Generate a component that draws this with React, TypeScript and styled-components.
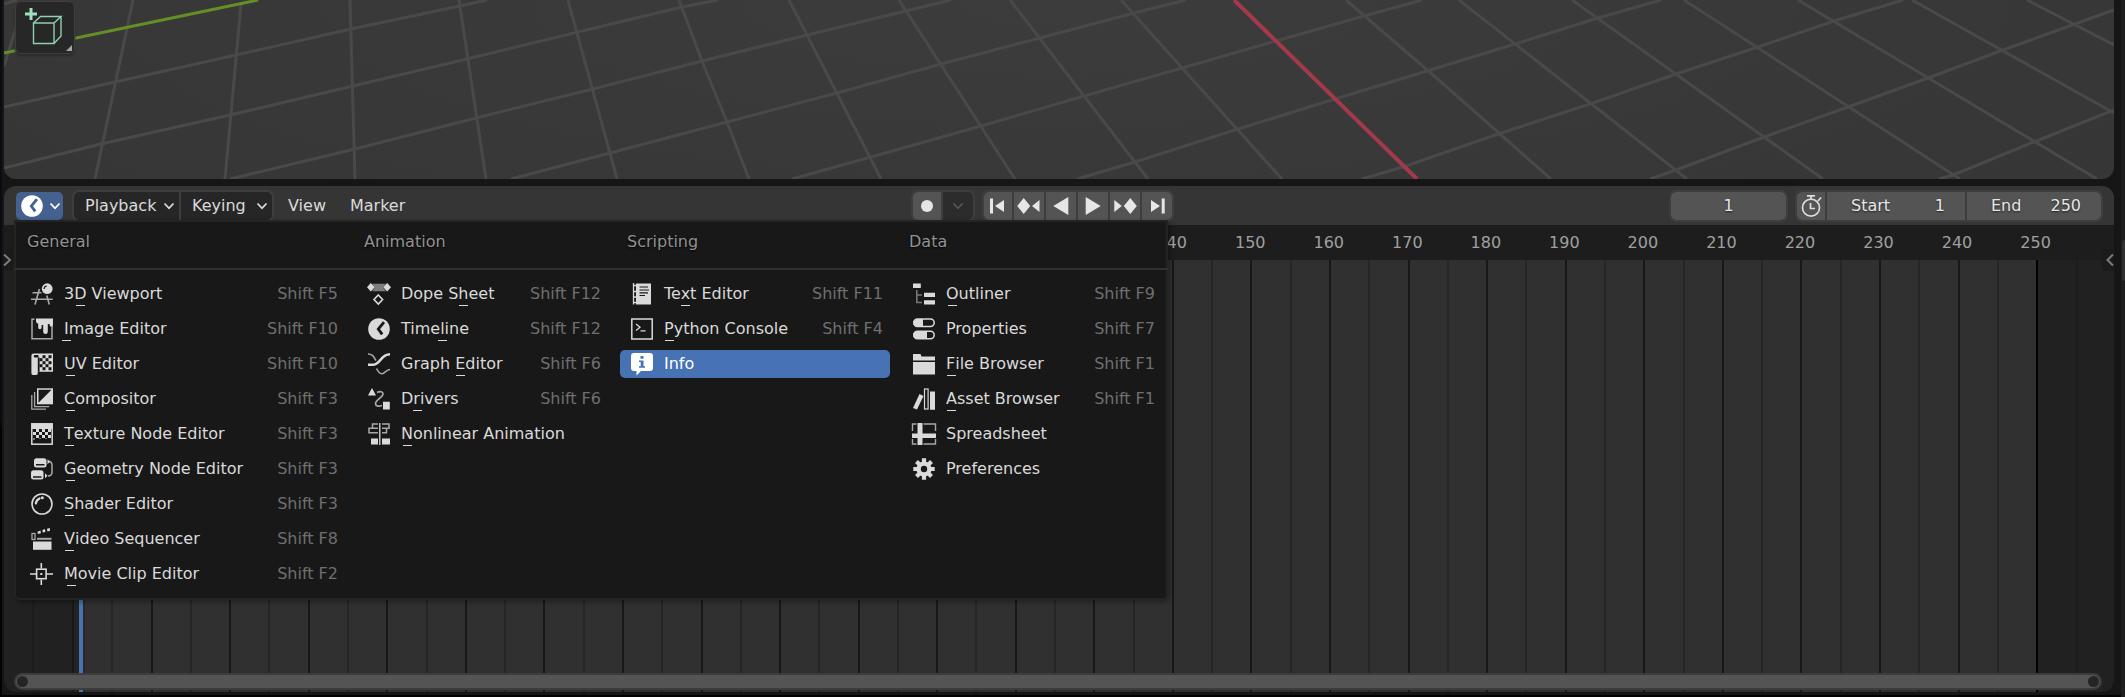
import React from "react";
import styled, { createGlobalStyle, css } from "styled-components";

const GlobalStyle = createGlobalStyle`
  * { box-sizing: border-box; }
  html, body { margin: 0; background: #161616; }
  body, button, input {
    font-family: "DejaVu Sans", sans-serif;
    font-size: 16px;
    line-height: 20px;
  }
  button {
    margin: 0;
    padding: 0;
    border: 0;
    background: none;
    color: inherit;
    text-align: left;
  }
`;

const color = {
  gap: "#161616",
  header: "#353535",
  outline: "#3e3e3e",
  field: "#545454",
  dark: "#262626",
  text: "#dadada",
  icon: "#dcdcdc",
  dim: "#a8a8a8",
};

/* ---------- window frame ---------- */

const Window = styled.div`
  display: flex;
  min-height: 100vh;
  background: ${color.gap};
  color: ${color.text};
  overflow: hidden;
`;

const LeftEdge = styled.div`
  width: 2px;
  background: linear-gradient(#0a0c14 0 60%, #030304 62%);
`;

const Workspace = styled.main`
  flex: 1;
  min-width: 0;
  display: flex;
  flex-direction: column;
  gap: 7px;
  padding: 0 7px 5px 2px;
  box-shadow: inset 0 -2px #020202;
`;

const Neighbour = styled.aside`
  width: 4px;
  display: flex;
  flex-direction: column;
  padding-top: 240px;
  background: #1e1e1e;
`;

const NeighbourTab = styled.div`
  height: 41px;
  margin-left: 1px;
  border-radius: 4px 0 0 4px;
  background: #303030;
`;

/* ---------- viewport ---------- */

const Viewport = styled.section`
  position: relative;
  height: 179px;
  border-radius: 0 0 12px 12px;
  overflow: hidden;
  background: radial-gradient(ellipse 70% 200% at 50% 0, #3c3c3c, #353535);
`;

const Floor = styled.svg`
  display: block;
  width: 100%;
  height: 100%;
`;

const ToolButton = styled.button`
  position: absolute;
  top: 1px;
  left: 11px;
  display: flex;
  width: 60px;
  height: 53px;
  border: 1px solid #3f3f3f;
  border-radius: 6px;
  background: #272727;
  box-shadow: 0 2px 2px #2b2b2b;
`;

/* ---------- timeline ---------- */

const Timeline = styled.section`
  position: relative;
  flex: 1;
  display: flex;
  flex-direction: column;
  border-radius: 12px;
  background: #212121;
`;

const Header = styled.header`
  display: flex;
  justify-content: space-between;
  align-items: center;
  height: 39px;
  padding: 0 13px 0 12px;
  border-radius: 12px 12px 0 0;
  background: ${color.header};
  text-shadow: 0 1px 2px rgba(0, 0, 0, 0.6);
`;

const Cluster = styled.div<{ $gap: number }>`
  display: flex;
  align-items: center;
  gap: ${(p) => p.$gap}px;
`;

const Group = styled.div`
  display: flex;
  gap: 2px;
  height: 28px;
  border-radius: 5px;
  overflow: hidden;
  background: ${color.outline};
  outline: 2px solid ${color.outline};
`;

const EditorType = styled.button`
  display: flex;
  align-items: center;
  gap: 6px;
  width: 47px;
  height: 28px;
  margin-right: 3px;
  padding-left: 5px;
  border-radius: 5px;
  background: #44618f;
  color: #fff;
`;

const MenuButton = styled.button<{ $width: number }>`
  display: flex;
  align-items: center;
  justify-content: space-between;
  width: ${(p) => p.$width}px;
  padding: 0 4px 0 11px;
  background: ${color.dark};
`;

const FlatButton = styled.button`
  height: 28px;
  padding: 0 8px;
`;

const IconButton = styled.button<{ $width: number; $dark?: boolean }>`
  display: flex;
  align-items: center;
  justify-content: center;
  width: ${(p) => p.$width}px;
  background: ${(p) => (p.$dark ? "#2c2c2c" : color.field)};
  color: ${(p) => (p.$dark ? "#555" : "#e6e6e6")};
`;

const NumberField = styled.label<{ $width: number; $center?: boolean }>`
  display: flex;
  align-items: center;
  width: ${(p) => p.$width}px;
  padding: ${(p) => (p.$center ? "0 20px" : "0 20px 0 24px")};
  background: ${color.field};
  color: #e6e6e6;
  input {
    flex: 1;
    min-width: 0;
    padding: 0;
    border: 0;
    outline: 0;
    background: none;
    color: inherit;
    text-shadow: inherit;
    text-align: ${(p) => (p.$center ? "center" : "right")};
  }
`;

const Ruler = styled.div`
  display: flex;
  align-items: center;
  height: 35px;
  padding: 0 39px 0 29px;
  background: #1d1d1d;
  color: #a0a0a0;
`;

const RulerMark = styled.span`
  flex: 1;
  min-width: 0;
  text-align: center;
`;

const Tracks = styled.div`
  position: relative;
  flex: 1;
  display: flex;
  border-radius: 0 0 12px 12px;
  overflow: hidden;
`;

const lineColor = { faint: "#1d1d1d", minor: "#262626", major: "#181818", end: "#030303" };

const Cell = styled.div<{ $line: keyof typeof lineColor; $width?: number }>`
  ${(p) =>
    p.$width
      ? css`
          flex: 0 0 ${p.$width}px;
        `
      : css`
          flex: 1;
          background: #303030;
        `}
  border-right: 2px solid ${(p) => lineColor[p.$line]};
`;

const Tail = styled.div`
  flex: 0 0 36px;
`;

const Playhead = styled.div`
  position: absolute;
  top: 0;
  bottom: 0;
  left: 70px;
  width: 11px;
  border-left: 5px solid #232323;
  border-right: 2px solid #282828;
  background: #4772b3;
`;

const ScrollBar = styled.div`
  position: absolute;
  left: 10px;
  right: 12px;
  bottom: 2px;
  display: flex;
  justify-content: space-between;
  align-items: center;
  height: 17px;
  padding: 0 1px;
  border: 2px solid #3c3c3c;
  border-radius: 9px;
  background: #545454;
`;

const ScrollHandle = styled.span`
  width: 11px;
  height: 11px;
  border-radius: 50%;
  background: #252525;
`;

const RegionToggle = styled.button<{ $side: "left" | "right" }>`
  position: absolute;
  top: 63px;
  display: flex;
  align-items: center;
  height: 22px;
  background: #1b1b1b;
  color: #7c7c7c;
  ${(p) =>
    p.$side === "left"
      ? css`
          left: 0;
          width: 9px;
          border-radius: 0 4px 4px 0;
        `
      : css`
          right: 0;
          width: 12px;
          padding-left: 4px;
          border-radius: 4px 0 0 4px;
        `}
`;

/* ---------- editor type menu ---------- */

const Menu = styled.nav`
  position: absolute;
  top: 34px;
  left: 10px;
  z-index: 2;
  display: grid;
  grid-template-columns: 325px 251px 270px 260px;
  column-gap: 12px;
  padding: 0 4px;
  border: 2px solid #242424;
  border-radius: 0 0 6px 6px;
  background: #181818;
  box-shadow: 2px 2px 5px rgba(0, 0, 0, 0.35);
  text-shadow: 0 1px 2px #000;
`;

const Title = styled.h2`
  margin: 0;
  height: 46px;
  padding: 10px 7px;
  font-size: 16px;
  line-height: 20px;
  font-weight: 400;
  color: #929292;
`;

const Divider = styled.hr`
  grid-column: 1 / -1;
  height: 2px;
  margin: 0 -6px;
  border: 0;
  background: #303030;
`;

const Items = styled.div`
  display: flex;
  flex-direction: column;
  gap: 7px;
  padding: 10px 0;
`;

const Item = styled.button<{ $active?: boolean }>`
  display: flex;
  align-items: center;
  height: 28px;
  padding: 0 7px 0 11px;
  border-radius: 5px;
  color: ${(p) => (p.$active ? "#fff" : color.text)};
  background: ${(p) => (p.$active ? "#4772b3" : "transparent")};
`;

const ItemLabel = styled.span`
  flex: 1;
  padding-left: 11px;
  white-space: nowrap;
`;

const Shortcut = styled.span`
  color: #6f6f6f;
  white-space: nowrap;
`;

const Mnemonic = styled.span`
  position: relative;
  &::after {
    content: "";
    position: absolute;
    left: calc(50% - 4px);
    bottom: -3px;
    width: 9px;
    height: 1px;
    background: currentColor;
  }
`;

/* ---------- icons ---------- */

const Drawing = styled.svg`
  flex: none;
  overflow: visible;
`;

const Svg = ({ children, w = 22, h = 22 }: { children: React.ReactNode; w?: number; h?: number }) => (
  <Drawing width={w} height={h} viewBox={`0 0 ${w} ${h}`} fill="currentColor" aria-hidden="true">
    {children}
  </Drawing>
);

const Chevron = () => (
  <Svg w={12} h={8}>
    <path d="M1.5 1.5 6 6.3 10.5 1.5" fill="none" stroke="currentColor" strokeWidth="1.8" />
  </Svg>
);

const bg = "#181818";

const Checks = ({ x, y, cols, rows, s, fill }: { x: number; y: number; cols: number; rows: number; s: number; fill: string }) => (
  <g fill={fill}>
    {Array.from({ length: cols * rows }, (_, i) => {
      const c = i % cols;
      const r = Math.floor(i / cols);
      return (c + r) % 2 ? <rect key={i} x={x + c * s} y={y + r * s} width={s} height={s} /> : null;
    })}
  </g>
);

const Clock = ({ hand }: { hand: string }) => (
  <Svg>
    <circle cx="11" cy="11" r="10.8" />
    <path d="M16 4.2 10.3 11l3.9 5.4" fill="none" stroke={hand} strokeWidth="2.8" />
  </Svg>
);

const icons: Record<string, React.ReactNode> = {
  view3d: (
    <Svg>
      <g fill="none" stroke={color.dim} strokeWidth="1.6">
        <path d="M0 16.3h21.7M1.5 9.8h9M8.4 6 4 21.5M15.8 12.5l2.5 9" />
      </g>
      <circle cx="16.2" cy="5.7" r="5.4" />
      <path d="M13 6a3.2 3.2 0 0 1 2.8-3" fill="none" stroke={bg} strokeWidth="1.2" />
    </Svg>
  ),
  image: (
    <Svg>
      <path d="M3.5 1.2H1v19.6h20V8" fill="none" stroke={color.dim} strokeWidth="1.5" />
      <path d="M5 .4h17v6.5a1.5 1.5 0 0 1-3.4 0V6h-1.8v7.700a2.300 2.300 0 0 1-4.600 0V7h-1.600v2.500a1.700 1.700 0 0 1-3.400 0V5.800A3 3 0 0 1 5 3.500z" />
    </Svg>
  ),
  uv: (
    <Svg>
      <path d="M2.5.5H22v18.3H6.8V20a1.8 1.8 0 0 1-1.8 2H2a1.8 1.8 0 0 1-1.6-2V2.5A2.200 2.200 0 0 1 2.500.5z" />
      <rect x="6.8" y="4.5" width="1.8" height="14.3" fill={bg} />
      <rect x="2.8" y="2" width="4.8" height="2.5" rx="1" fill={bg} />
      <Checks x={8.5} y={2.2} cols={4} rows={5} s={3} fill={bg} />
    </Svg>
  ),
  compositor: (
    <Svg>
      <path d="M.8 7v14.2h14.2M3.6 4v14.6h14.6" fill="none" stroke={color.dim} strokeWidth="1.3" />
      <rect x="6" y=".3" width="16" height="16" />
      <path d="M7.5 1.800h13L7.500 14.800z" fill={bg} />
    </Svg>
  ),
  texture: (
    <Svg>
      <rect x=".8" y=".8" width="20.4" height="20.4" fill="none" stroke="currentColor" strokeWidth="1.5" />
      <rect x="1" y="1" width="20" height="5" />
      <Checks x={2} y={6} cols={6} rows={3} s={3} fill="currentColor" />
      <path d="M2 15h2v2H2zM8 15h2v1H8zM14 15h2v1h-2z" fill="#777" />
    </Svg>
  ),
  geometry: (
    <Svg>
      <rect x="3" y=".3" width="12.5" height="9.2" rx="2.5" />
      <rect x="0" y="12.2" width="12.5" height="9.3" rx="2.5" />
      <path d="M5 6.7h8.5M2 19h8.5" stroke={bg} strokeWidth="1.4" />
      <path d="M18 3.3c2.500.5 3 2 3 4V14c0 2.500-1.500 4-4 4" fill="none" stroke={color.dim} strokeWidth="1.5" />
      <path d="M16.5 1.3 19 3.8l-2.5 2.5zM14 15.3l2.500 2.500L14 20.300z" />
    </Svg>
  ),
  shader: (
    <Svg>
      <circle cx="11" cy="11" r="10" fill="none" stroke="currentColor" strokeWidth="1.6" />
      <path d="M4.8 10.500A6.500 6.500 0 0 1 8.500 5.500" fill="none" stroke="currentColor" strokeWidth="2.2" strokeLinecap="round" />
      <circle cx="11.3" cy="4.8" r="1.5" />
    </Svg>
  ),
  sequencer: (
    <Svg>
      <rect x="1" y="5.5" width="3" height="6" fill="none" stroke={color.dim} strokeWidth="1.3" />
      <path d="M6 10.8h14.5" stroke={color.dim} strokeWidth="2" />
      <path d="m6.500 3.800 3-1.400.4 2.800-3.100.8zM11.400 2l2.600-.9.400 2.800-2.700.7zM16 .8l2.700-.7.400 2.700-2.700.7z" />
      <rect x="2" y="13.5" width="18.5" height="8.3" />
    </Svg>
  ),
  clip: (
    <Svg>
      <path d="M10.300 0v5.500M10.300 16.500V22M-1 11h6M15.500 11h6.500" stroke="currentColor" strokeWidth="1.6" />
      <rect x="5.6" y="6.200" width="9.5" height="9.5" fill="none" stroke="currentColor" strokeWidth="1.6" />
      <rect x="9.3" y="10" width="2" height="2" />
    </Svg>
  ),
  dopesheet: (
    <Svg>
      <path d="M4 .8h14l-3 3.700 3 3.800H4l3-3.800z" fill="#7d7d7d" />
      <path d="M2.800 0 6.800 4.300l-4 4.300-3.800-4.300zM19.200 0 23 4.300l-3.800 4.300-4-4.300z" />
      <path d="m10.300 12 4.300 4.500-4.300 4.500L6 16.500z" fill="none" stroke="currentColor" strokeWidth="1.6" />
    </Svg>
  ),
  timeline: <Clock hand={bg} />,
  graph: (
    <Svg>
      <path d="M0 1c4.500 0 5.500 2.500 8 6.500M8.500 15.500c2 4 3.500 5.500 5.500 5.200 3-.5 4-4 8-4.200" fill="none" stroke={color.dim} strokeWidth="1.6" />
      <path d="M0 11.700h5.500C12.500 11.700 12.500 1.200 22 1.200" fill="none" stroke="currentColor" strokeWidth="2.6" />
    </Svg>
  ),
  drivers: (
    <Svg>
      <path d="M4 0 8 7.500H0zM15 13.700h6.800v7.800H15z" />
      <path d="M9 4.500c3-1.500 6-1 6 1.500 0 3-7.500 6-7.500 9.500 0 2.500 3 3.500 6.500 2" fill="none" stroke={color.dim} strokeWidth="1.7" />
    </Svg>
  ),
  nla: (
    <Svg>
      <path d="M10 1H4.500v4.300H10M10 5.300H1v4.400h9M14 1h7v4.300h-7M14 5.300h4.500v4.400H14" fill="none" stroke={color.dim} strokeWidth="1.5" />
      <path d="M11.800 0v22" stroke="currentColor" strokeWidth="1.3" />
      <path d="M3 15.500h7v6H3zM14 15.500h8v6h-8z" />
    </Svg>
  ),
  text: (
    <Svg>
      <path d="M5 .5h15v21H5z" />
      <path d="M8.500 4h8.500M8.500 7h9.500M8.500 9.800h8.500M8.500 12.500h5.500" stroke={bg} strokeWidth="1.2" />
      <path d="M2.500 0v21.500M2 2.500h3M2 8.500h3M2 14h3M2 19.500h3" stroke="currentColor" strokeWidth="1.3" fill="none" />
    </Svg>
  ),
  console: (
    <Svg>
      <rect x=".8" y="1" width="20.4" height="20" fill="none" stroke="currentColor" strokeWidth="1.5" />
      <path d="m5 6 4 3.200-4 3.300M9.500 12.800h5" fill="none" stroke="currentColor" strokeWidth="1.3" />
    </Svg>
  ),
  info: (
    <Svg h={24}>
      <path d="M3 1h16a3 3 0 0 1 3 3v12a3 3 0 0 1-3 3h-9l-4.500 4.500V19H3a3 3 0 0 1-3-3V4a3 3 0 0 1 3-3z" />
      <path d="M9.500 4h3v2.700h-3zM8 8.500h4.500v5.800H14v1.500H8v-1.500h1.700V10H8z" fill="#4772b3" />
    </Svg>
  ),
  outliner: (
    <Svg>
      <path d="M0 .5h7.800V5H0zM11 9.800h11v4.200H11zM11 17.300h11v4.200H11z" />
      <path d="M3.800 7v12.500H9M4 12h5" fill="none" stroke="#777" strokeWidth="1.6" />
    </Svg>
  ),
  properties: (
    <Svg>
      <g fill="none" stroke="currentColor" strokeWidth="1.5">
        <rect x=".8" y="1" width="20.4" height="7.5" rx="3.7" />
        <rect x=".8" y="13.3" width="20.4" height="7.5" rx="3.7" />
      </g>
      <path d="M4 1h6v7.500H4A3.500 3.500 0 0 1 4 1zM4 13.300h10v7.500H4a3.500 3.500 0 0 1 0-7.500z" />
    </Svg>
  ),
  file: (
    <Svg>
      <path d="M0 1h7.500l1 2.500H22v4H0zM0 9h22v12.500H0z" />
    </Svg>
  ),
  asset: (
    <Svg>
      <path d="m6.500 6 4 2L4 21.500 0 20zM17 3.500h5v18.200h-5z" />
      <rect x="11.5" y="1" width="3.6" height="20" fill="none" stroke="currentColor" strokeWidth="1.2" />
    </Svg>
  ),
  spreadsheet: (
    <Svg>
      <path d="M-.5 8V1h4M10.500 1h12v7M-.5 16v5h4M10.500 21h12v-5" fill="none" stroke={color.dim} strokeWidth="1.400" />
      <path d="M4.500 0h5v10.500h13.500V15H9.500v7h-5v-7H-1v-4.500h5.500z" />
    </Svg>
  ),
  preferences: (
    <Svg>
      <g stroke="currentColor" strokeWidth="4.2">
        <path d="M11 .3v21.400M.3 11h21.400M3.500 3.500l15 15M18.500 3.500l-15 15" />
      </g>
      <circle cx="11" cy="11" r="7.6" />
      <circle cx="11" cy="11" r="3.2" fill={bg} />
    </Svg>
  ),
};

const Stopwatch = () => (
  <Svg w={24} h={24}>
    <g fill="none" stroke="#dcdcdc" strokeWidth="1.7">
      <circle cx="12" cy="13.7" r="8.5" />
      <path d="M8 1.800h8M12 2v3M19 7l3-3.500M11.500 9v5.500H16" />
    </g>
  </Svg>
);

/* ---------- data ---------- */

type Entry = { icon: string; label: string; key?: number; shortcut?: string; active?: boolean };

const columns: { title: string; entries: Entry[] }[] = [
  {
    title: "General",
    entries: [
      { icon: "view3d", label: "3D Viewport", key: 1, shortcut: "Shift F5" },
      { icon: "image", label: "Image Editor", key: 0, shortcut: "Shift F10" },
      { icon: "uv", label: "UV Editor", key: 0, shortcut: "Shift F10" },
      { icon: "compositor", label: "Compositor", key: 0, shortcut: "Shift F3" },
      { icon: "texture", label: "Texture Node Editor", key: 0, shortcut: "Shift F3" },
      { icon: "geometry", label: "Geometry Node Editor", key: 0, shortcut: "Shift F3" },
      { icon: "shader", label: "Shader Editor", key: 0, shortcut: "Shift F3" },
      { icon: "sequencer", label: "Video Sequencer", key: 0, shortcut: "Shift F8" },
      { icon: "clip", label: "Movie Clip Editor", key: 0, shortcut: "Shift F2" },
    ],
  },
  {
    title: "Animation",
    entries: [
      { icon: "dopesheet", label: "Dope Sheet", key: 6, shortcut: "Shift F12" },
      { icon: "timeline", label: "Timeline", key: 4, shortcut: "Shift F12" },
      { icon: "graph", label: "Graph Editor", key: 6, shortcut: "Shift F6" },
      { icon: "drivers", label: "Drivers", key: 1, shortcut: "Shift F6" },
      { icon: "nla", label: "Nonlinear Animation", key: 0 },
    ],
  },
  {
    title: "Scripting",
    entries: [
      { icon: "text", label: "Text Editor", key: 2, shortcut: "Shift F11" },
      { icon: "console", label: "Python Console", key: 0, shortcut: "Shift F4" },
      { icon: "info", label: "Info", active: true },
    ],
  },
  {
    title: "Data",
    entries: [
      { icon: "outliner", label: "Outliner", key: 0, shortcut: "Shift F9" },
      { icon: "properties", label: "Properties", shortcut: "Shift F7" },
      { icon: "file", label: "File Browser", key: 0, shortcut: "Shift F1" },
      { icon: "asset", label: "Asset Browser", key: 0, shortcut: "Shift F1" },
      { icon: "spreadsheet", label: "Spreadsheet" },
      { icon: "preferences", label: "Preferences" },
    ],
  },
];

const transport = [
  { label: "Jump to start", w: 28, d: "M6 6.500h3v15H6zM20 8v12l-9-6z" },
  { label: "Previous keyframe", w: 30, d: "M9.700 6l6.500 8-6.500 8-6.500-8zM25.500 8v12L18 14z" },
  { label: "Play reversed", w: 30, d: "M22.300 5v18L7.300 14z" },
  { label: "Play", w: 30, d: "M7.700 5v18l15-9z" },
  { label: "Next keyframe", w: 30, d: "M4.300 8v12l7.500-6zM20.300 6l6.500 8-6.500 8-6.500-8z" },
  { label: "Jump to end", w: 30, d: "M9 8v12l9-6zM19.700 6.500h3v15h-3z" },
];

const floorLines = [
  "M4 4 17 0",
  "M4 107 115 82 236 55 351 29 460 6 487 0",
  "M4 168 101 144 230 115 353 86 467 59 578 32 682 7 718 0",
  "M230 179 355 149 476 118 593 89 702 61 807 35 906 11 951 0",
  "M511 179 610 153 727 122 837 93 941 64 1040 38 1134 13 1186 0",
  "M792 179 871 157 981 126 1084 96 1182 68 1276 41 1364 16 1422 0",
  "M1077 179 1135 162 1238 129 1335 99 1427 71 1515 44 1598 18 1661 0",
  "M1362 179 1403 167 1498 134 1590 104 1676 74 1758 47 1834 21 1903 0",
  "M1650 179 1676 170 1764 137 1848 107 1928 78 2003 50 2075 24 2114 10",
  "M1939 179 1953 175 2034 142 2114 110",
  "M16 28 4 66",
  "M133 0 95 179",
  "M241 4 225 179",
  "M350 0 355 179",
  "M459 0 486 179",
  "M568 0 617 179",
  "M679 0 702 61 727 122 749 179",
  "M789 0 881 179",
  "M899 0 1015 179",
  "M1010 0 1148 179",
  "M1121 0 1282 179",
  "M1346 0 1440 81 1551 179",
  "M1459 0 1687 179",
  "M1572 0 1823 179",
  "M1684 0 1960 179",
  "M1798 0 2097 179",
  "M1912 0 2114 113",
  "M2027 0 2114 45",
];

const rulerFrames = Array.from({ length: 26 }, (_, i) => i * 10);
const firstVisibleFrame = 140;
const cells = Array.from({ length: 50 }, (_, i) => (i + 1) * 5);

/* ---------- view ---------- */

const Label = ({ text, at }: { text: string; at?: number }) =>
  at === undefined ? (
    <ItemLabel>{text}</ItemLabel>
  ) : (
    <ItemLabel>
      {text.slice(0, at)}
      <Mnemonic>{text[at]}</Mnemonic>
      {text.slice(at + 1)}
    </ItemLabel>
  );

export default function App() {
  return (
    <>
      <GlobalStyle />
      <Window>
        <LeftEdge />
        <Workspace>
          <Viewport aria-label="3D Viewport">
            <Floor viewBox="4 0 2110 179" preserveAspectRatio="xMidYMid slice" fill="none" strokeWidth="3">
              <g stroke="#494949">
                {floorLines.map((d) => (
                  <path key={d} d={d} />
                ))}
              </g>
              <path d="M4 53 258 0" stroke="#648f26" />
              <path d="M1234 0 1417 179" stroke="#a23a4b" strokeWidth="4" />
            </Floor>
            <ToolButton aria-label="Add cube">
              <Svg w={58} h={51}>
                <path d="M13.500 6h3v4.500H21v3h-4.500V18h-3v-4.500H9v-3h4.500z" fill="#9fe0be" />
                <path d="M17.500 21H38v20.500H17.500zM17.500 21l7-6.500h20.500L38 21M45 14.500V34l-7 7.500" fill="none" stroke="#8fd0ae" strokeWidth="1.4" />
                <path d="M56 43v6h-6z" fill="#a5a5a5" />
              </Svg>
            </ToolButton>
          </Viewport>

          <Timeline aria-label="Timeline">
            <Header>
              <Cluster $gap={8}>
                <EditorType aria-label="Editor type" aria-haspopup="menu">
                  <Clock hand="#44618f" />
                  <Chevron />
                </EditorType>
                <Group>
                  <MenuButton $width={105} aria-haspopup="menu">
                    Playback
                    <Chevron />
                  </MenuButton>
                  <MenuButton $width={91} aria-haspopup="menu">
                    Keying
                    <Chevron />
                  </MenuButton>
                </Group>
                <Cluster $gap={8}>
                  <FlatButton>View</FlatButton>
                  <FlatButton>Marker</FlatButton>
                </Cluster>
              </Cluster>

              <Cluster $gap={11}>
                <Group>
                  <IconButton $width={28} aria-label="Auto keying">
                    <Svg w={28} h={28}>
                      <circle cx="14" cy="14" r="6" />
                    </Svg>
                  </IconButton>
                  <IconButton $width={30} $dark aria-label="Auto keying options">
                    <Chevron />
                  </IconButton>
                </Group>
                <Group>
                  {transport.map((t) => (
                    <IconButton key={t.label} $width={t.w} aria-label={t.label}>
                      <Svg w={t.w} h={28}>
                        <path d={t.d} />
                      </Svg>
                    </IconButton>
                  ))}
                </Group>
              </Cluster>

              <Cluster $gap={11}>
                <Group>
                  <NumberField $width={115} $center>
                    <input aria-label="Current frame" defaultValue="1" />
                  </NumberField>
                </Group>
                <Group>
                  <IconButton $width={28} aria-label="Use preview range">
                    <Stopwatch />
                  </IconButton>
                  <NumberField $width={138}>
                    Start
                    <input defaultValue="1" />
                  </NumberField>
                  <NumberField $width={134}>
                    End
                    <input defaultValue="250" />
                  </NumberField>
                </Group>
              </Cluster>
            </Header>

            <Ruler>
              {rulerFrames.map((f) => (
                <RulerMark key={f}>{f >= firstVisibleFrame ? f : null}</RulerMark>
              ))}
            </Ruler>

            <Tracks>
              <Cell $width={30} $line="faint" />
              <Cell $width={40} $line="major" />
              {cells.map((f) => (
                <Cell key={f} $line={f === 250 ? "end" : f % 10 ? "minor" : "major"} />
              ))}
              <Cell $width={40} $line="faint" />
              <Tail />
              <Playhead />
              <ScrollBar>
                <ScrollHandle />
                <ScrollHandle />
              </ScrollBar>
            </Tracks>

            <RegionToggle $side="left" aria-label="Show channels">
              <Svg w={8} h={14}>
                <path d="M0 1.500 6 7 0 12.500" fill="none" stroke="currentColor" strokeWidth="2" />
              </Svg>
            </RegionToggle>
            <RegionToggle $side="right" aria-label="Show sidebar">
              <Svg w={8} h={14}>
                <path d="M7 1.500 1.500 7 7 12.500" fill="none" stroke="currentColor" strokeWidth="2" />
              </Svg>
            </RegionToggle>

            <Menu aria-label="Editor type">
              {columns.map((c) => (
                <Title key={c.title}>{c.title}</Title>
              ))}
              <Divider />
              {columns.map((c) => (
                <Items key={c.title}>
                  {c.entries.map((e) => (
                    <Item key={e.label} $active={e.active}>
                      {icons[e.icon]}
                      <Label text={e.label} at={e.key} />
                      {e.shortcut && <Shortcut>{e.shortcut}</Shortcut>}
                    </Item>
                  ))}
                </Items>
              ))}
            </Menu>
          </Timeline>
        </Workspace>
        <Neighbour>
          <NeighbourTab />
        </Neighbour>
      </Window>
    </>
  );
}
